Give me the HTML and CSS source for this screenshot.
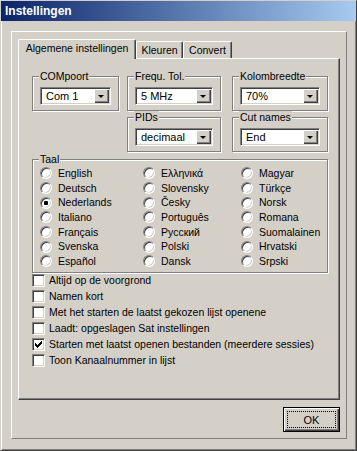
FILE: index.html
```html
<!DOCTYPE html>
<html lang="nl">
<head>
    <meta charset="UTF-8">
    <meta name="viewport" content="width=device-width, initial-scale=1.0">
    <title>Instellingen</title>
    <link rel="stylesheet" href="styles.css">
</head>
<body>
    <div class="window">
        <div class="titlebar">Instellingen</div>

        <div class="frame">
            <div class="tabs">
                <div class="tab tab-active">Algemene instellingen</div>
                <div class="tab tab-kleuren">Kleuren</div>
                <div class="tab tab-convert">Convert</div>
            </div>

            <div class="panel">
                <div class="top-grid">
                    <fieldset class="group group-com">
                        <legend>COMpoort</legend>
                        <div class="combo"><span class="combo-text">Com 1</span><span class="combo-btn"></span></div>
                    </fieldset>
                    <fieldset class="group group-freq">
                        <legend>Frequ. Tol.</legend>
                        <div class="combo"><span class="combo-text">5 MHz</span><span class="combo-btn"></span></div>
                    </fieldset>
                    <fieldset class="group group-kolom">
                        <legend>Kolombreedte</legend>
                        <div class="combo"><span class="combo-text">70%</span><span class="combo-btn"></span></div>
                    </fieldset>
                    <fieldset class="group group-pids">
                        <legend>PIDs</legend>
                        <div class="combo"><span class="combo-text">decimaal</span><span class="combo-btn"></span></div>
                    </fieldset>
                    <fieldset class="group group-cut">
                        <legend>Cut names</legend>
                        <div class="combo"><span class="combo-text">End</span><span class="combo-btn"></span></div>
                    </fieldset>
                </div>

                <fieldset class="group group-taal">
                    <legend>Taal</legend>
                    <div class="radio-grid">
                        <div class="radio-row"><span class="radio"></span>English</div>
                        <div class="radio-row"><span class="radio"></span>Deutsch</div>
                        <div class="radio-row"><span class="radio checked"></span>Nederlands</div>
                        <div class="radio-row"><span class="radio"></span>Italiano</div>
                        <div class="radio-row"><span class="radio"></span>Français</div>
                        <div class="radio-row"><span class="radio"></span>Svenska</div>
                        <div class="radio-row"><span class="radio"></span>Español</div>

                        <div class="radio-row"><span class="radio"></span>Ελληνικά</div>
                        <div class="radio-row"><span class="radio"></span>Slovensky</div>
                        <div class="radio-row"><span class="radio"></span>Česky</div>
                        <div class="radio-row"><span class="radio"></span>Português</div>
                        <div class="radio-row"><span class="radio"></span>Русский</div>
                        <div class="radio-row"><span class="radio"></span>Polski</div>
                        <div class="radio-row"><span class="radio"></span>Dansk</div>

                        <div class="radio-row"><span class="radio"></span>Magyar</div>
                        <div class="radio-row"><span class="radio"></span>Türkçe</div>
                        <div class="radio-row"><span class="radio"></span>Norsk</div>
                        <div class="radio-row"><span class="radio"></span>Romana</div>
                        <div class="radio-row"><span class="radio"></span>Suomalainen</div>
                        <div class="radio-row"><span class="radio"></span>Hrvatski</div>
                        <div class="radio-row"><span class="radio"></span>Srpski</div>
                    </div>
                </fieldset>

                <div class="checks">
                    <div class="check-row"><span class="checkbox"></span>Altijd op de voorgrond</div>
                    <div class="check-row"><span class="checkbox"></span>Namen kort</div>
                    <div class="check-row"><span class="checkbox"></span>Met het starten de laatst gekozen lijst openene</div>
                    <div class="check-row"><span class="checkbox"></span>Laadt: opgeslagen Sat instellingen</div>
                    <div class="check-row">
                        <span class="checkbox">
                            <svg width="7" height="7" viewBox="0 0 7 7">
                                <rect x="0" y="2" width="1" height="3"/>
                                <rect x="1" y="3" width="1" height="3"/>
                                <rect x="2" y="4" width="1" height="3"/>
                                <rect x="3" y="3" width="1" height="3"/>
                                <rect x="4" y="2" width="1" height="3"/>
                                <rect x="5" y="1" width="1" height="3"/>
                                <rect x="6" y="0" width="1" height="3"/>
                            </svg>
                        </span>Starten met laatst openen bestanden (meerdere sessies)
                    </div>
                    <div class="check-row"><span class="checkbox"></span>Toon Kanaalnummer in lijst</div>
                </div>
            </div>

            <div class="button-row">
                <button class="btn btn-default"><span class="btn-focus">OK</span></button>
            </div>
        </div>
    </div>
</body>
</html>
```

FILE: styles.css
```css
* {
    margin: 0;
    padding: 0;
    box-sizing: border-box;
}

body {
    font-family: "Liberation Sans", Arial, sans-serif;
    font-size: 10.5px;
    line-height: 13px;
    color: #000;
    background: #d4d0c8;
}

.window {
    width: 357px;
    height: 451px;
    background: #d4d0c8;
    border: 1px solid;
    border-color: #d4d0c8 #404040 #404040 #d4d0c8;
    box-shadow: inset 1px 1px #fff, inset -1px -1px #808080;
}

.titlebar {
    height: 20px;
    padding-left: 4px;
    background: linear-gradient(90deg, #0a246a 0%, #a6caf0 100%);
    color: #fff;
    font-weight: bold;
    font-size: 12px;
    line-height: 20px;
}

/* raised frame round the whole client area */
.frame {
    width: 336px;
    margin: 10px 0 0 10px;
    padding: 7px 6px 6px 6px;
    border: 1px solid;
    border-color: #fff #808080 #808080 #fff;
}

.tabs {
    display: flex;
    align-items: flex-end;
    height: 19px;
}

.tab {
    height: 17px;
    padding-top: 2px;
    text-align: center;
    border-top: 1px solid #fff;
    border-left: 1px solid #fff;
    border-right: 1px solid #404040;
    border-radius: 2px 2px 0 0;
    box-shadow: inset -1px 0 #808080;
    white-space: nowrap;
}

.tab-active {
    width: 118px;
    height: 20px;
    margin-bottom: -1px;
    position: relative;
    z-index: 1;
    background: #d4d0c8;
}

.tab-kleuren {
    width: 47px;
}

.tab-convert {
    width: 49px;
}

.panel {
    height: 342px;
    padding: 11px 0 0 13px;
    border: 1px solid;
    border-color: #fff #404040 #404040 #fff;
    box-shadow: inset -1px -1px #808080;
}

.top-grid {
    display: grid;
    grid-template-columns: 87px 8px 94px 11px 96px;
    grid-template-rows: auto auto;
}

.group {
    min-inline-size: 0;
    border: 1px solid #808080;
    box-shadow: inset 1px 1px #fff, 1px 1px #fff;
    padding: 4px 7px 5px 7px;
}

.group legend {
    margin-left: -1px;
    padding: 0 1px;
    background: #d4d0c8;
    line-height: 13px;
}

.group-com   { grid-column: 1; grid-row: 1; }
.group-freq  { grid-column: 3; grid-row: 1; }
.group-kolom { grid-column: 5; grid-row: 1; }
.group-pids  { grid-column: 3; grid-row: 2; }
.group-cut   { grid-column: 5; grid-row: 2; }

.combo {
    display: flex;
    align-items: center;
    height: 18px;
    background: #fff;
    border: 1px solid;
    border-color: #808080 #fff #fff #808080;
    box-shadow: inset 1px 1px #404040, inset -1px -1px #d4d0c8;
    padding: 1px;
}

.combo-text {
    flex: 1;
    padding-left: 4px;
    line-height: 14px;
    font-size: 11px;
}

.combo-btn {
    width: 15px;
    height: 14px;
    background: #d4d0c8;
    box-shadow: inset 1px 1px #fff, inset -1px -1px #404040, inset -2px -2px #808080;
    display: flex;
    align-items: center;
    justify-content: center;
}

.combo-btn::after {
    content: "";
    width: 0;
    height: 0;
    margin-top: 1px;
    margin-right: 1px;
    border-left: 3px solid transparent;
    border-right: 3px solid transparent;
    border-top: 3px solid #000;
}

.group-taal {
    width: 296px;
    margin-top: 1px;
    padding: 0 0 3px 7px;
}

.radio-grid {
    display: grid;
    grid-template-columns: 103px 98px 1fr;
    grid-template-rows: repeat(7, 14.7px);
    grid-auto-flow: column;
}

.radio-row {
    display: flex;
    align-items: center;
    white-space: nowrap;
}

.radio {
    width: 12px;
    height: 12px;
    margin-right: 6px;
    border-radius: 50%;
    background: #fff;
    border: 1px solid;
    border-color: #808080 #fff #fff #808080;
    box-shadow: inset 1px 1px #404040, inset -1px -1px #d4d0c8;
    display: flex;
    align-items: center;
    justify-content: center;
}

.radio.checked::after {
    content: "";
    width: 4px;
    height: 4px;
    border-radius: 1px;
    background: #000;
}

.check-row {
    display: flex;
    align-items: center;
    height: 16px;
    white-space: nowrap;
}

.checkbox {
    width: 13px;
    height: 13px;
    margin-right: 4px;
    background: #fff;
    border: 1px solid;
    border-color: #808080 #fff #fff #808080;
    box-shadow: inset 1px 1px #404040, inset -1px -1px #d4d0c8;
    display: flex;
    align-items: center;
    justify-content: center;
}

.checkbox svg {
    fill: #000;
}

.button-row {
    display: flex;
    justify-content: flex-end;
    margin-top: 7px;
}

.btn {
    width: 57px;
    height: 25px;
    padding: 3px;
    font-family: inherit;
    font-size: 11px;
    background: #d4d0c8;
    border: 1px solid #000;
    box-shadow: inset 1px 1px #fff, inset -1px -1px #404040, inset -2px -2px #808080;
    display: flex;
}

.btn-focus {
    flex: 1;
    display: flex;
    align-items: center;
    justify-content: center;
    border: 1px dotted #000;
    font-size: 11px;
}
```
